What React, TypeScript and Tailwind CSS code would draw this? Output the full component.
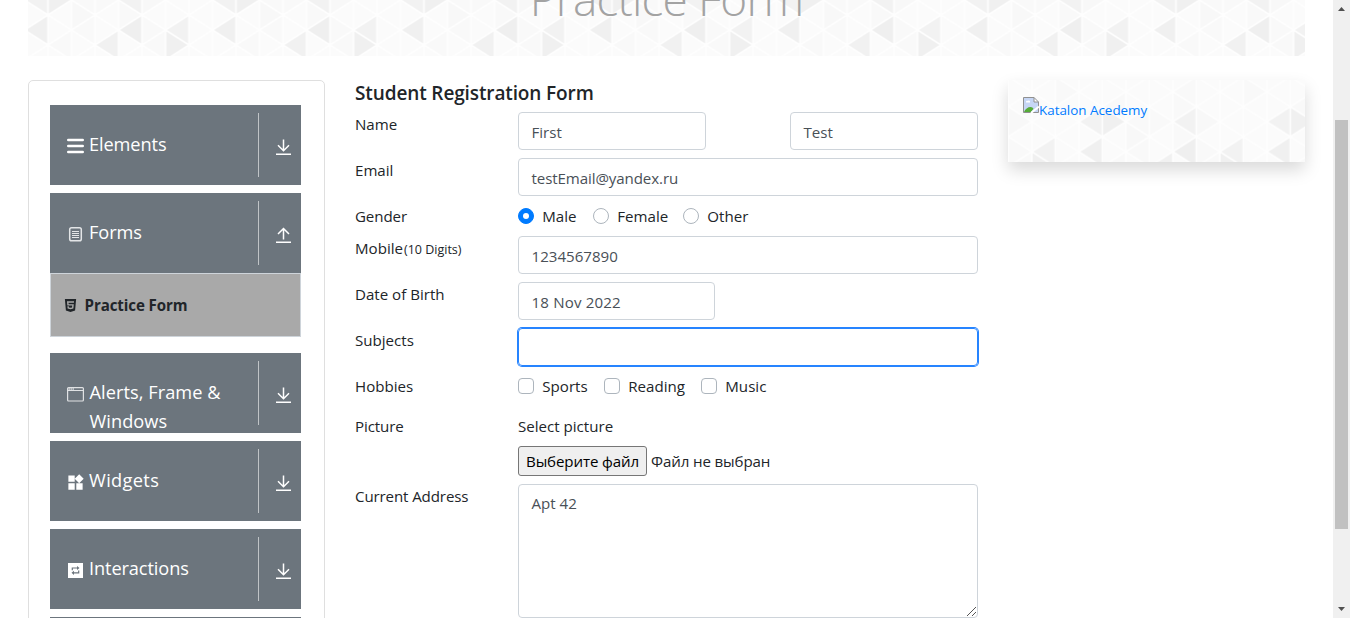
import React from "react";
import { FaHtml5 } from "react-icons/fa";
import { MdWidgets } from "react-icons/md";

const COL = 23.5;
const ROW = 15;

// Triangles pointing left (L) or right (R): column, row of the apex, fill.
const tris: [string, number, number, string][] = [
  ["L", 0, 0, "#f2f2f2"], ["L", 4, 0, "#f2f2f2"], ["R", 1, 0, "#f0f0f0"],
  ["L", 0, 2, "#f0f0f0"], ["L", 4, 2, "#efefef"], ["L", 6, 2, "#f2f2f2"],
  ["L", 3, 3, "#f1f1f1"], ["R", 6, 3, "#f0f0f0"],
  ["R", 3, 0, "#f9f9f9"], ["R", 5, 0, "#f8f8f8"], ["L", 2, 0, "#f9f9f9"],
  ["R", 2, 1, "#f8f8f8"], ["R", 4, 1, "#f9f9f9"],
  ["L", 2, 2, "#f9f9f9"], ["R", 5, 2, "#f9f9f9"], ["L", 1, 3, "#f9f9f9"],
  ["L", 5, 3, "#f9f9f9"], ["R", 4, -1, "#f9f9f9"], ["L", 1, -1, "#f9f9f9"],
  ["L", 4, -2, "#f9f9f9"], ["R", 7, -2, "#f9f9f9"],
];

function Triangles({ id, ox, oy }: { id: string; ox: number; oy: number }) {
  const w = COL * 8;
  const h = ROW * 8;
  const lines: string[] = [];
  for (let k = 0; k <= 8; k++) lines.push(`M${k * COL} ${-ROW}V${h}`);
  for (let m = -10; m <= 16; m += 2) {
    lines.push(`M0 ${m * ROW}L${w} ${(m + 8) * ROW}`);
    lines.push(`M0 ${m * ROW}L${w} ${(m - 8) * ROW}`);
  }
  return (
    <svg className="absolute inset-0 h-full w-full" aria-hidden="true">
      <defs>
        <pattern id={id} width={w} height={h} patternUnits="userSpaceOnUse" x={ox} y={oy - 3 * ROW}>
          <rect width={w} height={h} fill="#fbfbfb" />
          {tris.map(([d, k, r, f], i) => {
            const y = (r + 3) * ROW;
            const x = k * COL;
            const p =
              d === "L"
                ? `M${x} ${y}L${x + COL} ${y - ROW}V${y + ROW}Z`
                : `M${x + COL} ${y}L${x} ${y - ROW}V${y + ROW}Z`;
            return <path key={i} d={p} fill={f} />;
          })}
          <path d={lines.join("")} stroke="#fefefe" strokeWidth="1.6" fill="none" transform={`translate(0 ${ROW})`} />
        </pattern>
      </defs>
      <rect width="100%" height="100%" fill={`url(#${id})`} />
    </svg>
  );
}

function Arrow({ up = false }: { up?: boolean }) {
  return (
    <svg width="17" height="18" viewBox="0 0 17 18" fill="none" stroke="#fff" strokeWidth="1.5">
      <path d={up ? "M8.5 13.5V2.5M3 8l5.5-5.5L14 8M1 16.3h15" : "M8.5 1.5v11M3 7.2l5.5 5.5L14 7.2M1 16.3h15"} />
    </svg>
  );
}

const icons: Record<string, React.ReactNode> = {
  Elements: (
    <svg width="18" height="18" viewBox="0 0 18 18" stroke="#fff" strokeWidth="2.6" strokeLinecap="round">
      <path d="M2.3 4h14.400M2.300 10h14.400M2.300 16h14.400" />
    </svg>
  ),
  Forms: (
    <svg width="18" height="18" viewBox="0 0 18 18" fill="none" stroke="#e3e5e7">
      <rect x="3.700" y="3.700" width="11.600" height="13.100" rx="1.800" strokeWidth="1.500" />
      <path d="M6 7.500h7M6 9.500h7M6 11.500h7M6 13.500h7" strokeWidth="1" />
    </svg>
  ),
  "Alerts, Frame & Windows": (
    <svg width="18" height="18" viewBox="0 0 18 18" fill="none" stroke="#e0e2e4">
      <rect x="1.600" y="3.600" width="15.800" height="13.400" rx="1" strokeWidth="1.200" />
      <path d="M1.500 6.500h16" strokeWidth="1" />
      <path d="M2.500 5h6" strokeWidth="1.600" strokeDasharray="1.400 .6" />
    </svg>
  ),
  Widgets: <MdWidgets size={19} color="#fff" className="mt-px" />,
  Interactions: (
    <svg width="18" height="18" viewBox="0 0 18 18">
      <rect x="2" y="3" width="15" height="15" fill="#fff" />
      <path d="M6.300 10.300V8h5M12.700 10.500v2.300h-5" fill="none" stroke="#6c757d" strokeWidth="1.200" />
      <path d="M11 5.900l2.500 2.100-2.500 2.100zM8 10.700l-2.500 2.100 2.500 2.100z" fill="#6c757d" />
    </svg>
  ),
};

function Group({ label, up = false, tail = "mb-2", text = "" }: { label: string; up?: boolean; tail?: string; text?: string }) {
  return (
    <div className={`flex h-20 shrink-0 overflow-hidden bg-[#6c757d] py-2 text-white ${tail}`}>
      <div className="flex w-[208px] shrink-0 pl-4">
        <div className="flex w-[23px] shrink-0 pt-[23px]">{icons[label]}</div>
        <div className={`w-[150px] pt-[17px] text-[18.2px] leading-[29px] ${text}`}>{label}</div>
      </div>
      <div className="flex h-16 w-[43px] border-l border-[#c0c4c7] pl-4 pt-[25px]">
        <Arrow up={up} />
      </div>
    </div>
  );
}

const field = "flex items-center rounded border border-[#ced4da] bg-white pl-[12.5px] pr-3 pt-[2px] h-[38px] text-[#495057]";

function Row({ label, h, children }: { label: React.ReactNode; h: string; children: React.ReactNode }) {
  return (
    <div className={`flex shrink-0 ${h}`}>
      <div className="w-[163px] shrink-0 leading-6">{label}</div>
      <div className="w-[460px]">{children}</div>
    </div>
  );
}

function Option({ label, radio = false, on = false, w }: { label: string; radio?: boolean; on?: boolean; w: string }) {
  return (
    <label className={`flex items-center ${w}`}>
      <span
        className={`mr-[8.3px] flex size-4 shrink-0 items-center justify-center border ${radio ? "rounded-full" : "rounded"} ${
          on ? "border-[#007bff] bg-[#007bff]" : "border-[#adb5bd] bg-white"
        }`}
      >
        {on && <span className="size-[6px] rounded-full bg-white" />}
      </span>
      {label}
    </label>
  );
}

function BrokenImage() {
  return (
    <svg width="16" height="16" viewBox="0 0 16 16" className="shrink-0">
      <path d="M.5.5h10.500l4.500 4.500v10.500H.5z" fill="#c6d6f5" />
      <path d="M3 5c0-1.400 1.400-1.700 2-1 1-1 2.500 0 2 1.500H3z" fill="#fff" />
      <path d="M1 15c1-3 4-5 6.500-5 1.500 0 2.500 1 3 1.700L8 15z" fill="#56ac38" />
      <path d="M11 .5V5h4.500z" fill="#fff" />
      <path d="M.5.5H11l4.500 4.500v10.500H.5zM11 .5V5h4.500" fill="none" stroke="#909090" />
      <path d="M8 16l8-6.500" stroke="#fff" strokeWidth="2" />
    </svg>
  );
}

export default function App() {
  return (
    <div className="flex h-[618px] w-[1350px] overflow-hidden bg-white font-['Open_Sans','Noto_Sans',sans-serif] text-[15.1px] text-[#212529]">
      <main className="flex h-full w-[1333px] flex-col pl-7">
        <header className="relative h-14 w-[1277px] shrink-0 overflow-hidden">
          <Triangles id="banner" ox={-3.5} oy={0} />
          <h1 className="relative -mt-[33px] text-center text-[46px] font-light leading-[62px] tracking-[-0.85px] text-[#a3a3a3]">
            Practice Form
          </h1>
        </header>
        <div className="mt-6 flex min-h-0 flex-1">
          <nav className="mr-[30px] flex h-[600px] w-[297px] shrink-0 flex-col rounded-[5px] border border-[#dfdfdf] pl-[21px] pr-[23px] pt-6">
            <Group label="Elements" text="tracking-[-0.1px]" />
            <Group label="Forms" up tail="mb-0" text="tracking-[-0.1px]" />
            <div className="mb-4 flex h-16 shrink-0 items-center border border-[#ced4da] bg-[#a9a9a9] pl-3 font-bold tracking-[-0.1px]">
              <FaHtml5 size={15} className="mr-[6.5px]" />
              Practice Form
            </div>
            <Group label="Alerts, Frame & Windows" text="pl-[0.5px] tracking-[0.05px]" />
            <Group label="Widgets" text="tracking-[0.35px]" />
            <Group label="Interactions" text="tracking-[-0.1px]" />
            <div className="h-20 shrink-0 bg-[#6c757d]" />
          </nav>

          <form className="mr-[30px] flex w-[623px] shrink-0 flex-col">
            <h5 className="h-8 shrink-0 text-[19px] font-semibold leading-[26px] tracking-[-0.12px]">Student Registration Form</h5>
            <Row label="Name" h="h-[46px]">
              <div className="flex justify-between">
                <div className={`${field} w-[188px]`}>First</div>
                <div className={`${field} w-[188px]`}>Test</div>
              </div>
            </Row>
            <Row label="Email" h="h-[46px]">
              <div className={`${field} tracking-[-0.1px]`}>testEmail@yandex.ru</div>
            </Row>
            <Row label={<span className="tracking-[-0.1px]">Gender</span>} h="h-8">
              <div className="flex h-6">
                <Option label="Male" radio on w="w-[75px]" />
                <Option label="Female" radio w="w-[90px]" />
                <Option label="Other" radio w="w-20" />
              </div>
            </Row>
            <Row label={<>Mobile<span className="pl-px text-[12.5px]">(10 Digits)</span></>} h="h-[46px]">
              <div className={field}>1234567890</div>
            </Row>
            <Row label="Date of Birth" h="h-[46px]">
              <div className={`${field} w-[197px] tracking-[0.15px]`}>18 Nov 2022</div>
            </Row>
            <Row label="Subjects" h="h-[46px]">
              <div className="h-[38px] rounded border border-[#2684ff] shadow-[0_0_0_1px_#2684ff]" />
            </Row>
            <Row label="Hobbies" h="h-10">
              <div className="flex h-6">
                <Option label="Sports" w="w-[86px]" />
                <Option label="Reading" w="w-[97px]" />
                <Option label="Music" w="w-20" />
              </div>
            </Row>
            <Row label={<span className="tracking-[-0.1px]">Picture</span>} h="h-[70px]">
              <div className="mb-2 leading-6">Select picture</div>
              <div className="flex h-[30px] items-center tracking-[-0.12px]">
                <div className="mr-1 flex h-[30px] w-[129px] items-center justify-center whitespace-nowrap rounded-[3px] border border-[#767676] bg-[#efefef] text-black">
                  Выберите файл
                </div>
                Файл не выбран
              </div>
            </Row>
            <Row label={<span className="tracking-[-0.12px]">Current Address</span>} h="h-[134px]">
              <div className="relative h-[134px] rounded border border-[#ced4da] px-[12.5px] py-[6px] leading-6 text-[#495057]">
                Apt 42
                <svg className="absolute bottom-px right-px" width="9" height="9" stroke="#555" strokeWidth="1">
                  <path d="M0 9L9 0M5 9l4-4" />
                </svg>
              </div>
            </Row>
          </form>

          <aside className="relative h-[82px] w-[297px] shrink-0 shadow-[0_8px_16px_rgba(0,0,0,0.15)]">
            <Triangles id="card" ox={70.8} oy={41.7} />
            <a className="relative flex pl-[15px] pt-[17px] text-[13.4px] leading-[26px] text-[#007bff]">
              <BrokenImage />
              Katalon Acedemy
            </a>
          </aside>
        </div>
      </main>
      <div className="flex h-full w-[17px] flex-col items-center bg-[#f0f0f0] py-[7px]">
        <svg width="7" height="4"><path d="M0 4L3.500 0 7 4z" fill="#505050" /></svg>
        <div className="mt-[109px] h-[409px] w-[13px] bg-[#c1c1c1]" />
        <svg width="7" height="4" className="mt-auto"><path d="M0 0L3.500 4 7 0z" fill="#505050" /></svg>
      </div>
    </div>
  );
}
